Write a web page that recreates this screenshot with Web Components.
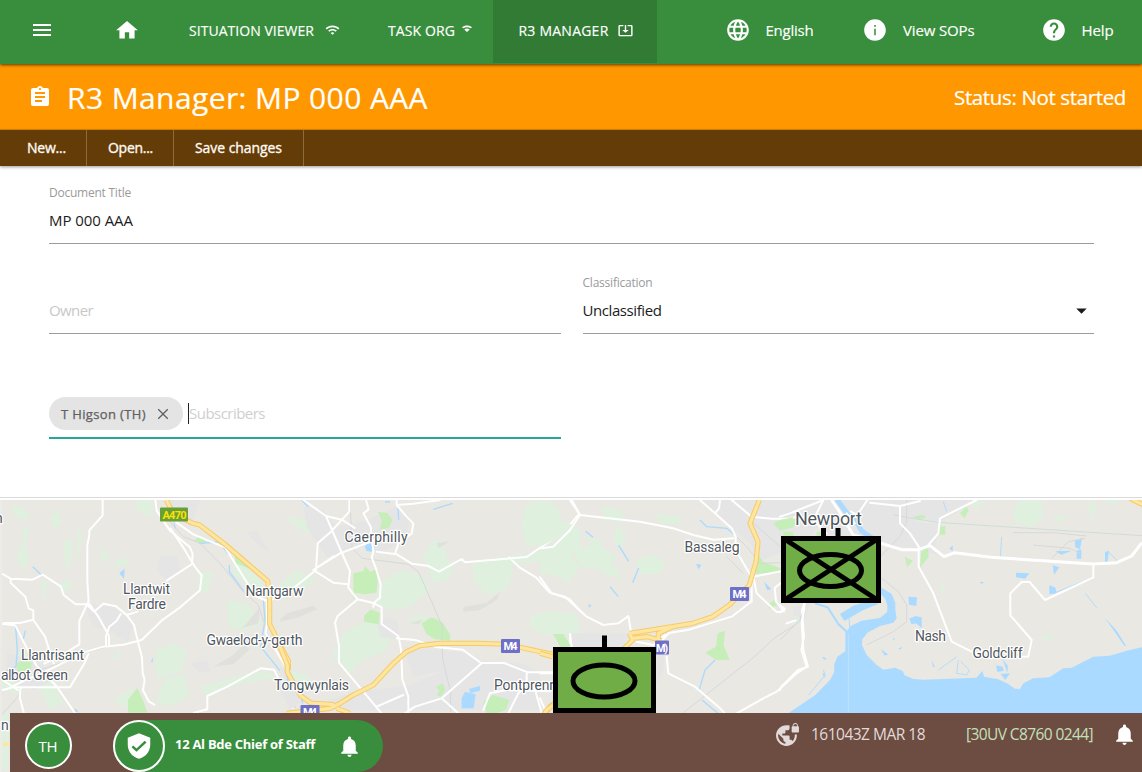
<!DOCTYPE html>
<html lang="en">
<head>
<meta charset="utf-8">
<title>R3 Manager</title>
<style>
html,body{margin:0;height:100%}
body{font-family:"Open Sans","Noto Sans",sans-serif;background:#fff;overflow:hidden}
</style>
</head>
<body>
<r3-app></r3-app>
<script>
const define = (name, html, cls = HTMLElement) => {
  const t = document.createElement('template');
  t.innerHTML = html;
  customElements.define(name, class extends cls {
    connectedCallback() {
      if (!this.shadowRoot) this.attachShadow({mode: 'open'}).append(t.content.cloneNode(true));
      if (this.ready) this.ready();
    }
  });
};

/* Text run tracked to a given advance width (attribute w, in px). */
define('fit-text', `<style>:host{display:block;white-space:nowrap;flex:none}span{display:inline-block}</style><span><slot></slot></span>`,
  class extends HTMLElement {
    ready() {
      const w = +this.getAttribute('w'), s = this.shadowRoot.querySelector('span');
      const n = this.textContent.length, nat = s.getBoundingClientRect().width;
      if (w && nat) s.style.letterSpacing = ((w - nat) / n).toFixed(3) + 'px';
      this.style.width = w + 'px';
    }
  });

const ICONS = {
  menu: 'M3 18h18v-2H3v2zm0-5h18v-2H3v2zm0-7v2h18V6H3z',
  home: 'M10 20v-6h4v6h5v-8h3L12 3 2 12h3v8z',
  wifi: 'M1 9l2 2c4.97-4.97 13.03-4.97 18 0l2-2C16.93 2.93 7.08 2.93 1 9zm8 8l3 3 3-3c-1.65-1.66-4.34-1.66-6 0zm-4-4l2 2c2.76-2.76 7.24-2.76 10 0l2-2C15.14 9.14 8.87 9.14 5 13z',
  spot: 'M2 8.500C7.500 3.500 16.500 3.500 22 8.500L19.500 10.500C15 7.500 9 7.500 4.500 10.500ZM6.500 13C9.500 10.300 14.500 10.300 17.500 13L12 18Z',
  inbox: 'M20 3H4c-1.100 0-2 .9-2 2v14c0 1.100.9 2 2 2h16c1.100 0 2-.9 2-2V5c0-1.100-.9-2-2-2zm0 16H4V5h5V3h6v2h5v14zM13 3h-2v8H7.500l4.500 4.500 4.500-4.500H13z',
  globe: 'M11.99 2C6.47 2 2 6.48 2 12s4.470 10 9.990 10C17.520 22 22 17.520 22 12S17.520 2 11.990 2zm6.930 6h-2.950c-.32-1.250-.78-2.450-1.380-3.560 1.840.63 3.370 1.910 4.330 3.560zM12 4.040c.83 1.200 1.480 2.530 1.910 3.960h-3.820c.43-1.430 1.080-2.760 1.910-3.960zM4.260 14C4.100 13.360 4 12.690 4 12s.1-1.360.26-2h3.380c-.08.66-.14 1.320-.14 2 0 .68.06 1.340.14 2H4.260zm.82 2h2.950c.32 1.250.78 2.450 1.380 3.560-1.840-.63-3.370-1.900-4.330-3.560zm2.950-8H5.080c.96-1.660 2.490-2.930 4.330-3.560C8.810 5.550 8.350 6.750 8.030 8zM12 19.960c-.83-1.200-1.480-2.530-1.910-3.960h3.820c-.43 1.430-1.080 2.760-1.910 3.960zM14.340 14H9.660c-.09-.66-.16-1.320-.16-2 0-.68.07-1.350.16-2h4.680c.09.65.16 1.320.16 2 0 .68-.07 1.340-.16 2zm.25 5.560c.6-1.110 1.060-2.310 1.380-3.560h2.950c-.96 1.650-2.490 2.930-4.330 3.560zM16.360 14c.08-.66.14-1.320.14-2 0-.68-.06-1.340-.14-2h3.380c.16.64.26 1.310.26 2s-.1 1.360-.26 2h-3.380z',
  info: 'M12 2C6.480 2 2 6.480 2 12s4.480 10 10 10 10-4.480 10-10S17.520 2 12 2zm.7 14.800h-1.400v-6h1.400v6zm0-7.900h-1.400V7.300h1.400v1.600z',
  help: 'M12 2C6.480 2 2 6.480 2 12s4.480 10 10 10 10-4.480 10-10S17.520 2 12 2zm1 17h-2v-2h2v2zm2.070-7.750l-.9.92C13.450 12.900 13 13.500 13 15h-2v-.5c0-1.100.45-2.100 1.170-2.830l1.240-1.260c.37-.36.59-.86.59-1.410 0-1.100-.9-2-2-2s-2 .9-2 2H8c0-2.210 1.790-4 4-4s4 1.790 4 4c0 .88-.36 1.680-.93 2.250z',
  clip: 'M19 3h-4.180C14.400 1.840 13.300 1 12 1c-1.300 0-2.400.84-2.820 2H5c-1.100 0-2 .9-2 2v14c0 1.100.9 2 2 2h14c1.100 0 2-.9 2-2V5c0-1.100-.9-2-2-2zm-7 0c.55 0 1 .45 1 1s-.45 1-1 1-1-.45-1-1 .45-1 1-1zm2 14H7v-2h7v2zm3-4H7v-2h10v2zm0-4H7V7h10v2z',
  bell: 'M12 22c1.100 0 2-.9 2-2h-4c0 1.100.89 2 2 2zm6-6v-5c0-3.070-1.640-5.640-4.500-6.320V4c0-.83-.67-1.500-1.500-1.500s-1.500.67-1.500 1.500v.68C7.630 5.360 6 7.920 6 11v5l-2 2v1h16v-1l-2-2z',
  shield: 'M12 1L3 5v6c0 5.550 3.840 10.740 9 12 5.160-1.260 9-6.450 9-12V5l-9-4zm-2 16l-4-4 1.410-1.410L10 14.170l6.590-6.590L18 9l-8 8z',
  close: 'M19 6.200 17.800 5 12 10.800 6.200 5 5 6.200 10.800 12 5 17.800 6.200 19 12 13.200 17.800 19 19 17.800 13.200 12z',
  drop: 'M7 10l5 5 5-5z',
  vpn: 'M22 4v-.5C22 2.120 20.880 1 19.500 1S17 2.120 17 3.500V4c-.55 0-1 .45-1 1v4c0 .55.45 1 1 1h5c.55 0 1-.45 1-1V5c0-.55-.45-1-1-1zm-.8 0h-3.400v-.5c0-.94.76-1.700 1.700-1.700s1.700.76 1.700 1.700V4zm-2.280 8c.04.33.08.66.08 1 0 2.080-.8 3.970-2.100 5.390-.26-.81-1-1.390-1.900-1.390h-1v-3c0-.55-.45-1-1-1H7v-2h2c.55 0 1-.45 1-1V8h2c1.100 0 2-.9 2-2V3.460c-.95-.3-1.950-.46-3-.46C5.480 3 1 7.480 1 13s4.480 10 10 10 10-4.480 10-10c0-.34-.02-.67-.05-1h-2.030zM10 20.930c-3.950-.49-7-3.850-7-7.930 0-.62.08-1.210.21-1.790L8 16v1c0 1.100.9 2 2 2v1.930z'
};
define('md-icon', `<style>:host{display:block;flex:none}svg{display:block;fill:currentColor}</style><svg viewBox="0 0 24 24"><path/></svg>`,
  class extends HTMLElement {
    ready() {
      const svg = this.shadowRoot.querySelector('svg'), s = this.getAttribute('size') || 24;
      svg.setAttribute('width', s); svg.setAttribute('height', this.getAttribute('tall') || s);
      if (this.hasAttribute('tall')) svg.setAttribute('preserveAspectRatio', 'none');
      svg.querySelector('path').setAttribute('d', ICONS[this.getAttribute('name')]);
    }
  });

define('nav-tab', `<style>
:host{display:flex;align-items:center;box-sizing:border-box;height:63px;padding-bottom:3px;font-size:14px;gap:11px;flex:none;-webkit-text-stroke:.15px}
:host([active]){background:#327b35;color:#fff}
</style><slot></slot>`);

define('top-bar', `<style>
:host{display:flex;height:63.500px;background:#388e3c;color:#fff;position:relative;z-index:2;box-shadow:0 1px 3px rgba(0,0,0,.65)}
.i{display:flex;align-items:center;height:60px;flex:none;-webkit-text-stroke:.15px}
</style>
<div class="i" style="margin-left:30px"><md-icon name="menu"></md-icon></div>
<div class="i" style="margin-left:59.500px"><md-icon name="home" size="26" tall="24.500"></md-icon></div>
<nav-tab style="padding-left:49.500px;width:198.500px"><fit-text w="125">SITUATION VIEWER</fit-text><md-icon name="wifi" size="15" tall="14"></md-icon></nav-tab>
<nav-tab style="padding-left:50px;width:155px;gap:6px"><fit-text w="67">TASK ORG</fit-text><md-icon name="spot" size="12" tall="12" style="margin-top:-2px"></md-icon></nav-tab>
<nav-tab active style="padding-left:25.500px;width:164px;gap:8px"><fit-text w="90">R3 MANAGER</fit-text><md-icon name="inbox" size="17" tall="15"></md-icon></nav-tab>
<div class="i" style="margin-left:67.500px;font-size:15px"><md-icon name="globe" size="26"></md-icon><fit-text w="48" style="margin-left:15px">English</fit-text></div>
<div class="i" style="margin-left:48.500px;font-size:15px"><md-icon name="info" size="26"></md-icon><fit-text w="71.500" style="margin-left:15px">View SOPs</fit-text></div>
<div class="i" style="margin-left:66px;font-size:15px"><md-icon name="help" size="26"></md-icon><fit-text w="32" style="margin-left:15px">Help</fit-text></div>`);

define('title-bar', `<style>
:host{display:flex;align-items:center;height:66px;background:#ff9800;color:#fff;box-sizing:border-box;padding:0 16px 0 27.500px;box-shadow:inset 0 -1px 0 #e08600;-webkit-text-stroke:.2px}
.t{font-size:30px;line-height:40px;margin-left:15.500px;margin-top:3px}
.s{font-size:20.500px;line-height:28px;margin-left:auto;margin-top:0}
</style><md-icon name="clip" size="24"></md-icon><fit-text class="t" w="361">R3 Manager: MP 000 AAA</fit-text><fit-text class="s" w="172">Status: Not started</fit-text>`);

define('menu-item', `<style>:host{display:flex;align-items:center;box-sizing:border-box;padding:0 20.500px 0 21px;border-right:1px solid #8b6a3c;height:100%}</style><slot></slot>`);
define('menu-bar', `<style>
:host{display:flex;height:36.500px;background:#643c08;color:#fffaf2;font-size:14px;padding-left:6px;box-shadow:0 1px 3px rgba(0,0,0,.4);position:relative;line-height:38px;-webkit-text-stroke:.35px}
</style>
<menu-item style="padding-right:20px"><fit-text w="39">New...</fit-text></menu-item>
<menu-item style="padding-right:20px"><fit-text w="45">Open...</fit-text></menu-item>
<menu-item><fit-text w="87">Save changes</fit-text></menu-item>`);

define('form-field', `<style>
:host{display:flex;flex-direction:column;box-sizing:border-box;height:62px;border-bottom:1px solid #9c9c9c;color:#1c1c1c;font-size:15px}
.l{height:20px;font-size:12px;line-height:21px;color:#9a9a9a}
.v{display:flex;align-items:center;height:37px;line-height:37px}
</style><div class="l"><slot name="label"></slot></div><div class="v"><slot></slot></div>`);

define('user-chip', `<style>
:host{display:flex;align-items:center;box-sizing:border-box;width:133.500px;height:33px;border-radius:17px;background:#e4e4e4;color:#606060;font-size:13px;-webkit-text-stroke:.25px;padding-left:12px;gap:7.500px;flex:none}
</style><slot></slot><md-icon name="close" size="18"></md-icon>`);

define('chip-input', `<style>
:host{display:flex;box-sizing:border-box;height:41.500px;border-bottom:2px solid #26a69a}
.c{width:1px;height:21px;background:#222;margin:5.500px 0 0 5.500px}
.p{font-size:15px;line-height:33px;color:#cfcfcf}
</style><slot></slot><div class="c"></div><fit-text class="p" w="76">Subscribers</fit-text>`);

define('doc-form', `<style>
:host{display:grid;box-sizing:border-box;height:331.500px;grid-template-columns:511.500px 511.500px;grid-template-rows:62px 90px 105px;align-items:end;align-content:start;column-gap:22px;padding:15.500px 49px 0;background:#fff;border-bottom:1px solid #dadada}
.w{grid-column:1/3}
.ph{color:#c8c8c8}
.arrow{margin-left:auto}
</style>
<form-field class="w"><fit-text slot="label" w="82">Document Title</fit-text><fit-text w="84">MP 000 AAA</fit-text></form-field>
<form-field><fit-text class="ph" w="44">Owner</fit-text></form-field>
<form-field><fit-text slot="label" w="70">Classification</fit-text><fit-text w="79">Unclassified</fit-text><md-icon class="arrow" name="drop" size="25"></md-icon></form-field>
<chip-input><user-chip><fit-text w="85">T Higson (TH)</fit-text></user-chip></chip-input>`);

define('unit-symbol', `<style>:host{display:block;position:absolute}svg{display:block;overflow:visible;fill:none;stroke:#000;stroke-width:5}.b{fill:#70ad47}</style>
<svg><rect class="b" x="2.500" y="2.500"/><ellipse rx="31" ry="16"/><path/></svg>`,
  class extends HTMLElement {
    ready() {
      const $ = q => this.shadowRoot.querySelector(q), w = +this.getAttribute('width'), h = +this.getAttribute('height');
      $('svg').setAttribute('width', w); $('svg').setAttribute('height', h);
      $('rect').setAttribute('width', w - 5); $('rect').setAttribute('height', h - 5);
      $('ellipse').setAttribute('cx', w / 2 - .5); $('ellipse').setAttribute('cy', h / 2 + 1);
      $('path').setAttribute('d', this.getAttribute('marks'));
    }
  });

define('area-map', `<style>
:host{display:block;position:relative;height:272px;margin-top:2.500px;overflow:hidden}
svg{display:block}
.g{fill:#dff0de}.p{fill:#c5eeb9}.u{fill:#e5e5e6}.k{fill:#e0e0dc}.w{fill:#aadaff}
.s{fill:none;stroke:#aadaff;stroke-width:4}
.f{fill:none;stroke:#d6d8da;stroke-width:3}
.r{fill:none;stroke:#fff;stroke-width:6;stroke-linejoin:round;stroke-linecap:round}
.R{fill:none;stroke:#fff;stroke-width:9;stroke-linejoin:round}
.m{fill:none;stroke:#f5cb69;stroke-width:15.500px;stroke-linejoin:round}
.n{fill:none;stroke:#fee5a0;stroke-width:9.500px;stroke-linejoin:round}
.t text{font:14px Roboto,sans-serif;fill:#50565d;stroke:#fff;stroke-width:2.500px;stroke-linejoin:round;paint-order:stroke}
.h rect{fill:#6e6fc6}.h text{font:bold 11px Roboto,sans-serif;fill:#fff}
</style>
<svg width="1142" height="272" viewBox="0 500 1142 272">
<rect y="500" width="1142" height="272" fill="#e9e8e3"/>
<g transform="translate(0 490) scale(.333333)">
<path class="g" d="M30 50l40 4 22 28-30 8-22-20zM70 115l18-4-12 62-10 25zM150 85l28-30 5 45-20 20zM190 150l28 2-6 70-10 20-8-40zM60 160l30 40-20 40-20-30zM235 110l12 30-12 80-4-50zM305 170l22 28-6 30-18-30zM340 215l40-12 4 20-30 8zM125 270l18 5-10 50-6-5zM175 285l30-18 14 22-30 25zM410 30h50l-4 50-46-20zM590 250l50-5-15 60-25 5zM680 330l60 10 50 60-60 20-45-10zM470 480l50-20 40 20-12 60-70 25-14-30zM490 570l60-20 20 70-60 30-40-18zM600 590l110-30 90-20 30 20-160 35-50 20zM60 480l70 15-30 40-60-5zM100 560l60 20 30 60-40 20zM0 560l60 10-4 40-56-12zM0 670h28l-5 170H0zM700 195l50 50 40 30-10 30-80-50zM330 500l40-20-20 30zM340 630l60-40-10 70z"/>
<path class="u" d="M480 200l50-4 12 50-40 28-32-35zM500 30h100l-20 60-60-10zM250 340l90 10 60 50-15 60-60-40-45-10zM20 490l90 20 50 60-60 30-80-30zM570 520l50-10 10 30-30 10zM740 130l30-10 40 70-30-20z"/>
<path class="k" d="M740 400l40-50-5 50-50 15zM640 530l60-35 30-30 20 12-50 45zM840 385l50-18 10 8-40 15z"/>
<path class="p" d="M582 152l15-12 28 8-15 14zM703 192l40 28v14l-36-14zM384 630l28-36 18 40 12 34h-58zM50 520l28-14 18 14-4 18-40 12z"/>
<path class="w" d="M358 250l16-14-2 30zM452 515l8-12-2 14zM520 90l10 30-8-10zM224 655l12 10h-12z"/>
<path class="s" d="M98 230l26 25M46 400l6 80-4 50-28 12M76 422l-6 25M597 160l60-4 28 36M688 225v20l44 60M790 330l5 60-8 50-5 30 60 75M866 520v50"/>
<path class="f" d="M505 90l45 50 50 20 60 60 70 85 45 40 20 60 4 40M0 680l50-55 15-25M885 590v80M120 540l60-20M250 490l70-20"/>
<path class="r" d="M308 30v46l-40 45v14l-6 30v110l4 58-28 60v70l-45 28-60 30M8 252l24 14 66 3 30-15 55 36 8 25 36 28h42l28 40 30 55v32M32 266v12l44 42 10 35 14 6v28l-40 10H12M100 390l35 50 26 80M262 345l20 20 28-24 38 8 32 26 22 30 12 50 12 48 2 46 6 20-5 32 18 34 16 9M8 402l38 4 35 70 28 50 60 62 55 80M8 570l45 30M20 598l40-20 90-40 100-50 60-18 60-6 55-14 62-60 48-34 65-55 5-45-23-30-30-50-40-60M8 600l30-8h172l45-75 10-25M62 592l-3 30 12 45M362 372l-12 20-22 18-10 28v28M380 375l32-10M500 272l76-50 2-30-8-20-60-50-40-60-4-32M530 98l50 35 96 40 90 145 35 15M815 330l85-70M801 330v70l-4 30 60 100 12 90 10 40M582 668l40-10v-40l60-28 100-55 40 4 20 40"/>
<path class="m" d="M499 30l20 40 60 30 20 5 76 58 128 110 6 50v80l56 110v52l28 20"/>
<path class="n" d="M499 30l20 40 60 30 20 5 76 58 128 110 6 50v80l56 110v52l28 20"/>
<path class="n" d="M8 763h20M860 668l40-5"/>
</g>
<g transform="translate(280 490) scale(.333333)">
<path class="g" d="M735 50l40-20 45 10 20 60-30 60-70 10-15-60zM430 200l30-50 30 10 10 40 20 40-20 30-40 10zM310 270l60-30 60 20 20 40-60 50-60 10-50-20zM580 220l60-15 60 30-15 60-60 20-45-40zM640 200l130-10 80-50 50-20v70l-80 20-100 10-60 20zM750 380l60-18 80 10 12 60-110 2-40-20zM190 430l50-30 60-2 40 30-30 60-60 20-40 40-55-50zM50 240l60 30-60 40-50 20v-50zM10 80l80 10 30 30-40 8zM30 540l60 20-30 70-30-30zM800 210l60-20 40 40-40 50zM380 390l50-20 20 40zM60 90l50-10 20 30-60 15z"/>
<path class="u" d="M70 50l60 10 40 50 90-20 90-40 40 30-10 70-80 40-60-20-100 30-60-90zM290 380l60 10 10 60-60-10zM240 600l130-10 130-50 80-30 150 10 50 30v110H20l100-20zM370 470l200 20 30 30-200 40zM0 530l30 10 40 90-40 30-30-60z"/>
<path class="k" d="M20 370l80-22 12 10-60 25-55 12zM550 350l70-10 40-35-10 25-50 30-50 5zM470 160l36-5-30 20zM390 400l40-12-15 15zM820 80l14 15 6 25-20-12z"/>
<path class="p" d="M293 65l30 5 15 20-12 24-28 5 8-25zM220 250l30-6 6-16 14 18 20-8 3 40-4 30-35 5-26-5-8 22zM252 378l20-20 28 10-4 35-24-4-20-5zM425 400l30-18 32 15 25 40-3 15-45-5-25-15zM468 590l20-10 8 20-14 20-12-4 8-14zM610 635l30-20 48 15-10 30-28 9h-30zM820 432h30l18 38h-20z"/>
<path class="w" d="M255 170l12-17 18 12-10 20-16-2zM545 625l10-20 32 8-6 42h-36zM568 596l32-8v14l-30 8z"/>
<path class="s" d="M460 58l58-18M354 55l2 35M65 30l20 20M822 434l30 36M15 520l10 60M60 600l8 40M315 36h15"/>
<path class="f" d="M210 30l6 145 30 30 80 10 60 8 30 24 40 90 30 70v60l2 40 24 100v60"/>
<path class="r" d="M70 30l68 48 50 12 36 24M208 30v35l-55 60-40 35-5 80-100 80M138 78l45 105 27 60-5 50 28 35 50 12 22 12v50l50 36 8 40 4 90 18 52v60M258 30l8 28-16 12 22 40 8 75-5 18 12 30 15 50-2 40-18 15-2 12M160 200l-60 40M100 240l80-50 105-40M100 240l60 38 45 5M233 328l-60 50-8 20 12 70v50l80 95 50 60M350 30v15l30 35 20 20-5 30-40 30-10 32M350 45l50-4 80-11M290 185l60 8 45 28 48 6 34 18 68-38 10 10 115-10 70-6 80-55 48-40 30-35-25-45M688 202l30 30 50 30 40 45 60 20 32 35M350 445l60 6 58 20 80 8 55 40 70 0 70 28h100M605 520l-120 105-80 25-30 20M485 625l50 45M290 650l80-35M740 550v30l-25 30-30 60M760 580l25 90M610 660l20-50 50-10 130 4M865 490l8-58"/>
<path class="m" d="M0 470l22 55v22l40 70 30 22 70 5M20 670l130-15 30-15 40-25 60-30 60-65 40-35 40-18 60-7h110l70 2 60 10 140 30M170 655l40 15M790 680l20-30 20-15"/>
<path class="n" d="M0 470l22 55v22l40 70 30 22 70 5M20 670l130-15 30-15 40-25 60-30 60-65 40-35 40-18 60-7h110l70 2 60 10 140 30M170 655l40 15M790 680l20-30 20-15"/>
</g>
<g transform="translate(540 490) scale(.333333)">
<path class="g" d="M0 60l20-20 40 20v80l-60 30zM60 90l50 20 15 30-70 25zM185 50l60 10 10 40-60-10zM290 210l50-18 35 25-15 35-60 0zM340 70l80 10 6 20-60 5zM230 100l30 40-20 40-20-30zM100 180l70-20 60 40-30 40-80-10zM0 170l90 30-20 60-70-10zM160 200l60 20 30 50-60-20zM130 140l60 10-10 30z"/>
<path class="u" d="M90 430h180l-30 50H100zM480 30h420v60l-60 15-50 60-140 50-15-50zM760 350l50-8-20 60-30-10zM350 480l20 0v60l-20 50z"/>
<path class="p" d="M700 100l35-18 40 5-15 25-40 10zM650 185l20 30 52 20v12l-75 5zM682 345l20-14 10 14-22 12zM496 488l32-18 5-40 22-8-4 44 18 44-40 0zM40 432h30l25 38H60zM730 125h30v14h-30z"/>
<path class="w" d="M468 222l16 2-8 14zM672 275l22 22-12 4zM145 344h10l-8 10zM884 30h16v22z"/>
<path class="s" d="M137 124l22 18M236 166l30 48M296 234l-18 44M210 290l25 30M480 90l20 20 60 5 25 20M525 510l-30 30-18 62M486 630l48 40M850 550l4 12M848 502l10 6"/>
<path class="f" d="M430 668l210-165 65-60 70-45 22-50M590 140l30 30 40 50 60-2M630 90l90 80M560 200l50 50"/>
<path class="r" d="M0 175l40-5 50-50 30-45-30-45M120 75l180 20 100 20 60 20 60 14 60-4M480 30l45 40 50 45 12 25 0 40 48 82M540 30l-3 25-12 15M575 30l60 50 60 6 60 0 60-30M850 100l50-50M0 262l35 48 40 10 65 60 50 25 45-5 30-22 10 60M290 455l50 10 35-30M380 500l5 50 80 40 70 60 20 20M590 670l80-45 40-20 60-55 30-20-16-50 8-40-6-80 14-40M640 260l10 50 60 56 22-2-24-30-4-40 25-20M640 260l90-18M90 432l5 38M635 262v72l-58 45-130 40-60 10-26 28M0 550h38M0 625l20 45M740 400l30-10"/>
<path class="m" d="M658 30l-28 70 24 55-6 60-20 70-60 60-50 35-60 20-60 10-128 20M0 490l38 10M268 430l10 20-35 35M278 445l45-5 42 12M400 410l-45 20 0 22"/>
<path class="n" d="M658 30l-28 70 24 55-6 60-20 70-60 60-50 35-60 20-60 10-128 20M0 490l38 10M268 430l10 20-35 35M278 445l45-5 42 12M400 410l-45 20 0 22"/>
<path class="m" d="M0 690l20-30 20-15"/><path class="n" d="M0 690l20-30 20-15"/>
</g>
<g transform="translate(780 490) scale(.333333)">
<path class="u" d="M10 30h590l-110 60-30 90 30 20-70-20-130-20-150-30z"/>
<path class="g" d="M560 40l60-10-30 25zM700 60l20-30h65l5 55-40 25-45-15zM820 85l30-10 10 12-35 10zM925 45l15-15 10 30-15 30zM475 290l16-4 6 12-16 6zM785 445l35-12 4 10-36 12zM285 468l20-6 4 8zM35 370l25 15-5 15zM970 30h40v20zM400 90l640 40v4L430 98z"/>
<path class="p" d="M398 80l30-6 12 8-25 6zM540 70l18-20 8 10-12 24zM478 110l18-2v26h-20zM424 185l20-14 2 30-26 32zM374 200l24 12-16 20zM0 90l40-8-5 30-35 10zM110 125h26v14h-26z"/>
<path class="w" d="M25 670L105 616 150 570 163 545 162 525 172 500 196 484V430L212 408 245 392 300 384 322 365V345L315 325 300 310V290L335 312 346 338V362L350 385 340 398 300 408 262 428 247 448 246 465 260 495 290 525 310 539 345 533 368 543 374 556 400 567 430 569 590 563 607 543 612 560 655 568 685 582 705 596 720 597 730 580 760 565 808 562 850 535 875 533 940 500 990 497 1040 482 1092 470V860H25z"/>
<path class="w" d="M180 372l40-25 45-14 28-2v12l-45 18-55 32zM385 320l26 2-2 26-22-4zM388 385l14-4 10 18-18 4zM403 378l22 4v32l-24-20zM708 248l40 2-12 16-28-4zM818 226l20 6-16 22zM808 285l18 8 4 16-22 4zM884 152l22-8-6 34-14-6zM890 182l14-4v28h-14zM508 176l10-10v16zM648 526l20 4 4 12-20 4zM662 552l28-2-14 20zM672 520l-6-14 18 22-2 20zM303 478l22 16-12 2zM340 442l4 8-6-2zM355 475l14-4-10 8zM455 510l10 22-6-2zM598 276h14l-6 6zM975 384l35 38 30 48-8-4zM825 184l50-2-30 12zM975 186l12-4-4 32-8 4z"/>
<path class="s" d="M170 28l30 40 20 10 25 45 45 30" style="stroke-width:15px"/>
<path class="s" d="M105 340l38 12 32 50 30 28" style="stroke-width:6px"/>
<path class="s" d="M205 360l5 60M820 310l120-48M916 310l35 45M475 540l55-40M535 510l-5 40 30 5 8-15-25-25M130 540l6 15-50 60M490 35l10 30M665 140l-4 65M985 185l30 30" style="stroke-width:2.500px"/>
<path class="f" d="M0 450l60-60 20-50M300 200l60-60 20-45 0-65M305 265l50 40 25 40v50l-40 30-80 40M340 75l130 22 616 40M700 128l120 0 100 10M815 205l50-50 50-10M760 165l110 10 30 15"/>
<path class="r" d="M262 30l-30 45-20-10M270 38l90 10 60-15M360 48v52l30 30 26 40v60l44 80 55 145 60 30M590 30l-110 55-5 45-30 35M940 222v40l-145 68-46-54h-24l-34 34v66l64 74-10 50h-30M0 80l30-10 100-40M65 400l10-60M65 400l5 80 14 50-30 10-50 50-4 10M200 70l25 30M130 30l-30 60 40 40M0 345l15 12-15 10"/>
<path class="R" d="M155 30l20 30 45 75 80 24 65 20h50l35-12 42 33 32-12 110 14 306 20 70-4 45-20 31-40"/>
<path class="m" d="M1050 25l50 25"/><path class="n" d="M1050 25l50 25"/>
<path d="M205 430v240" stroke="#bfe1fa" stroke-width="3"/>
</g>
<rect y="500" width="2" height="272" fill="#ecebe7"/>
<g class="t">
<text x="-5" y="523">n</text>
<text x="123" y="593.500" textLength="47">Llantwit</text><text x="128" y="608.500" textLength="38">Fardre</text>
<text x="21" y="659.500" textLength="63">Llantrisant</text><text x="1" y="680" textLength="67">albot Green</text><text x="1" y="730">n</text>
<text x="245.500" y="596" textLength="58">Nantgarw</text><text x="206.500" y="644.500" textLength="96">Gwaelod-y-garth</text><text x="274" y="689.500" textLength="75">Tongwynlais</text>
<text x="344.500" y="542" textLength="63">Caerphilly</text><text x="494" y="689.500" textLength="60">Pontprenr</text>
<text x="684.500" y="551.500" textLength="55">Bassaleg</text><text x="795" y="524.500" textLength="67" style="font-size:18px">Newport</text>
<text x="915" y="641" textLength="31">Nash</text><text x="972.500" y="658" textLength="50">Goldcliff</text>
</g>
<g class="h">
<rect x="160" y="507.500" width="28" height="14" rx="1" style="fill:#689f38"/><text x="162.500" y="518.500" textLength="24" style="fill:#ffe100">A470</text>
<rect x="501" y="639" width="19" height="14" rx="1"/><text x="503.500" y="650" textLength="14">M4</text>
<rect x="730" y="587" width="19" height="14" rx="1"/><text x="732.500" y="598" textLength="14">M4</text>
<rect x="655" y="640.500" width="14" height="14" rx="1"/><text x="656" y="652" textLength="12">M)</text>
<rect x="300.500" y="705" width="19" height="14" rx="1"/><text x="303" y="716" textLength="14">M4</text>
</g>
</svg>
<unit-symbol width="100" height="67" style="left:781px;top:36px" marks="M42.500-8V2M57-8V2M2 2L98 65M98 2L2 65"></unit-symbol>
<unit-symbol width="103" height="66" style="left:553px;top:147px" marks="M51.500-11.500V2"></unit-symbol>
<slot></slot>`);

/* Status strip laid over the bottom of the map. */
define('status-bar', `<style>
:host{position:absolute;left:10px;right:0;bottom:0;height:59px;background:#6d4c41;color:#fff;display:flex;box-sizing:border-box;padding:7px 5.500px 0 14.500px;overflow:hidden}
.a{box-sizing:border-box;width:47px;height:47px;margin-top:2px;border:2px solid #fff;border-radius:50%;background:#388e3c;display:flex;align-items:center;justify-content:center;font-size:15px;flex:none}
.pill{display:flex;align-items:center;box-sizing:border-box;width:270px;height:52px;margin-left:41.500px;border-radius:26px;background:#388e3c;flex:none}
.c{box-sizing:border-box;width:52px;height:52px;border:2px solid #fff;border-radius:50%;display:flex;align-items:center;justify-content:center;flex:none}
.n{font-size:13px;font-weight:700;margin:-4px 0 0 10px}
.r{display:flex;align-items:center;height:28px;margin-left:auto;font-size:15.500px}
</style>
<div class="a"><fit-text w="19">TH</fit-text></div>
<div class="pill"><div class="c"><md-icon name="shield" size="30" tall="28"></md-icon></div><fit-text class="n" w="140">12 Al Bde Chief of Staff</fit-text><md-icon name="bell" size="25" style="margin-left:22px"></md-icon></div>
<div class="r"><md-icon name="vpn" size="25" style="color:#e2dbd9"></md-icon><fit-text w="114" style="margin-left:11px;color:#e2dbd9">161043Z MAR 18</fit-text><fit-text w="127" style="margin-left:41px;color:#c3e0bc">[30UV C8760 0244]</fit-text><md-icon name="bell" size="25" style="margin-left:18.500px"></md-icon></div>`);

define('r3-app', `<style>:host{display:flex;flex-direction:column;width:1142px;height:772px;overflow:hidden}:host>*{flex:none}</style>
<top-bar></top-bar><title-bar></title-bar><menu-bar></menu-bar><doc-form></doc-form><area-map><status-bar></status-bar></area-map>`);
</script>
</body>
</html>
